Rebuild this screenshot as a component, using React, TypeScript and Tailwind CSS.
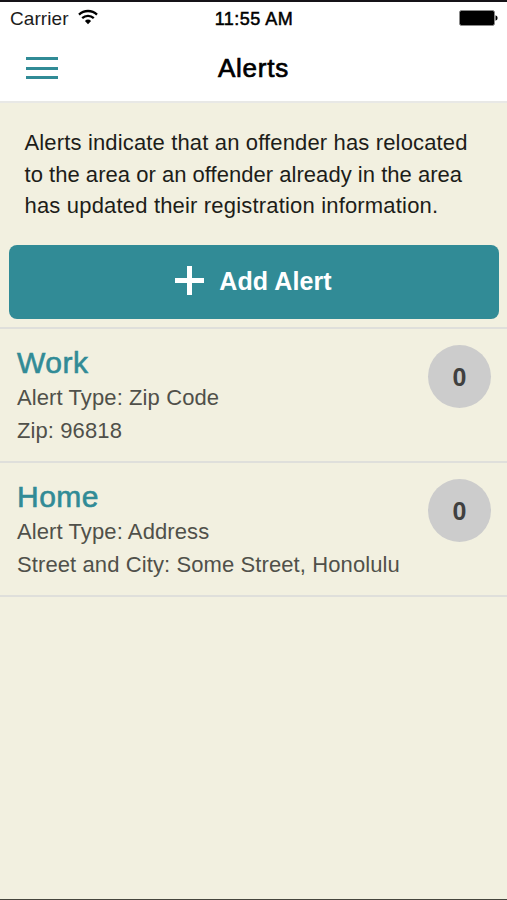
type AlertItem = {
    name: string;
    type: string;
    detail: string;
    count: number;
}

const alerts: AlertItem[] = [
    { name: "Work", type: "Alert Type: Zip Code", detail: "Zip: 96818", count: 0 },
    { name: "Home", type: "Alert Type: Address", detail: "Street and City: Some Street, Honolulu", count: 0 },
]

function StatusBar() {
    return (
        <div className="grid grid-cols-3 items-center h-[33px] pl-[10px] pr-[9px] text-lg leading-none text-black">
            <div className="flex items-center gap-[9px] text-[#1c1c1c]">
                <span className="text-[19px] tracking-[0.08px]">Carrier</span>
                <svg width="20" height="16" viewBox="0 0 20 16" className="-mt-[3px]" fill="none" stroke="#000" strokeWidth="2.3">
                    <path d="M1 5.6a13 13 0 0 1 18 0" />
                    <path d="M4.2 9.2a8.4 8.4 0 0 1 11.6 0" />
                    <path d="M10 15.2l-3.1-3.2a4.5 4.5 0 0 1 6.2 0z" fill="#000" stroke="none" />
                </svg>
            </div>
            <span className="text-center whitespace-nowrap tracking-[0.5px] [-webkit-text-stroke:0.5px]">11:55 AM</span>
            <svg width="39" height="16" viewBox="0 0 39 16" className="justify-self-end -mt-[2px]">
                <rect x="0.5" y="0.5" width="35" height="15" rx="2" fill="#000" stroke="#8a8a8a" />
                <path d="M36.5 5.2a2.9 2.9 0 0 1 0 5.6z" fill="#000" />
            </svg>
        </div>
    );
}

function NavBar() {
    return (
        <header className="grid grid-cols-3 items-center h-[68px] px-[26px] border-b-2 border-[#e8e8e6]">
            <button aria-label="Menu" className="flex flex-col gap-[6.5px] w-8">
                <span className="h-[3px] bg-[#318b96]"></span>
                <span className="h-[3px] bg-[#318b96]"></span>
                <span className="h-[3px] bg-[#318b96]"></span>
            </button>
            <h1 className="text-center text-[26px] leading-none tracking-[0.75px] text-black [-webkit-text-stroke:0.7px]">Alerts</h1>
        </header>
    );
}

function AlertRow({ alert }: { alert: AlertItem }) {
    return (
        <li className="flex justify-between h-[134px] pl-[17px] pr-4 border-t-2 border-[#dfdfdb]">
            <div className="pt-[16px] text-[22px] leading-[33px] tracking-[0.1px] text-[#50504a] whitespace-nowrap">
                <h2 className="mb-px text-[30px] leading-[35px] tracking-[0.5px] text-[#318b96] [-webkit-text-stroke:0.6px]">{alert.name}</h2>
                <p>{alert.type}</p>
                <p>{alert.detail}</p>
            </div>
            <div className="flex items-center justify-center size-[63px] mt-[16px] pt-[2px] rounded-full bg-[#cccccc] text-[25px] font-bold text-[#404040]">
                {alert.count}
            </div>
        </li>
    );
}

export default function App() {
    return (
        <div className="flex flex-col w-[507px] h-[900px] overflow-hidden bg-[#f2f0e0] border-t-2 border-t-[#151318] border-b border-b-[#45453c] font-['Liberation_Sans',Arial,sans-serif]">
            <div className="bg-white">
                <StatusBar />
                <NavBar />
            </div>
            <p className="pt-6 pl-[24.5px] text-[22px] leading-[31.7px] text-[#1d1d19] whitespace-nowrap">
                <span className="tracking-[0.15px]">Alerts indicate that an offender has relocated</span><br />
                <span className="tracking-[0.03px]">to the area or an offender already in the area</span><br />
                <span className="tracking-[0.18px]">has updated their registration information.</span>
            </p>
            <button className="flex items-center justify-center gap-[15px] shrink-0 h-[74px] mt-[23px] ml-[9px] mr-2 mb-2 pr-px pb-[4px] rounded-lg bg-[#318b96] text-[25px] tracking-[0.1px] font-bold text-white">
                <svg width="29" height="29" viewBox="0 0 29 29" stroke="#fff" strokeWidth="5">
                    <path d="M14.5 0v29M0 14.5h29" />
                </svg>
                <span className="pt-[3px]">Add Alert</span>
            </button>
            <ul>
                {alerts.map((alert) => (
                    <AlertRow key={alert.name} alert={alert} />
                ))}
            </ul>
            <div className="border-t-2 border-[#dfdfdb]"></div>
        </div>
    );
}
